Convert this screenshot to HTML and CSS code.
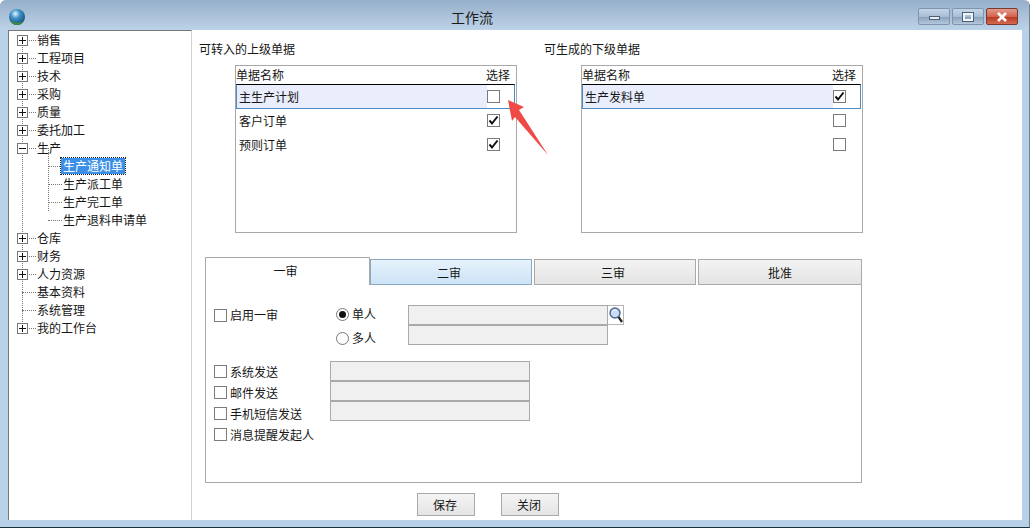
FILE: index.html
```html
<!DOCTYPE html>
<html lang="zh-CN">
<head>
<meta charset="utf-8">
<title>工作流</title>
<link rel="stylesheet" href="styles.css">
</head>
<body>
<div class="window">
  <header class="titlebar">
    <svg class="globe" width="16" height="16" viewBox="0 0 16 16">
      <defs>
        <radialGradient id="g" cx="0.4" cy="0.3" r="0.8">
          <stop offset="0" stop-color="#e8f6ff"/>
          <stop offset="0.35" stop-color="#3f94c8"/>
          <stop offset="1" stop-color="#0c3d6e"/>
        </radialGradient>
      </defs>
      <circle cx="8" cy="8" r="8" fill="url(#g)"/>
      <path d="M1 11c3 3 9 4 13 1-2 4-4 4-6 4-3 0-6-2-7-5z" fill="#3f8a3a"/>
    </svg>
    <div class="title">工作流</div>
    <div class="controls">
      <div class="ctl"><span class="min"></span></div>
      <div class="ctl"><span class="max"></span></div>
      <div class="ctl close">
        <svg width="14" height="10" viewBox="0 0 14 10"><path d="M3 1l8 8M11 1l-8 8" stroke="#fff" stroke-width="2.6" fill="none"/></svg>
      </div>
    </div>
  </header>
  <div class="client">
    <nav class="tree">
      <div class="node"><i class="box plus"></i><span>销售</span></div>
      <div class="node"><i class="box plus"></i><span>工程项目</span></div>
      <div class="node"><i class="box plus"></i><span>技术</span></div>
      <div class="node"><i class="box plus"></i><span>采购</span></div>
      <div class="node"><i class="box plus"></i><span>质量</span></div>
      <div class="node"><i class="box plus"></i><span>委托加工</span></div>
      <div class="node"><i class="box"></i><span>生产</span></div>
      <div class="kids">
        <div class="kid"><span class="sel">生产通知单</span></div>
        <div class="kid"><span>生产派工单</span></div>
        <div class="kid"><span>生产完工单</span></div>
        <div class="kid"><span>生产退料申请单</span></div>
      </div>
      <div class="node"><i class="box plus"></i><span>仓库</span></div>
      <div class="node"><i class="box plus"></i><span>财务</span></div>
      <div class="node"><i class="box plus"></i><span>人力资源</span></div>
      <div class="node leaf"><span>基本资料</span></div>
      <div class="node leaf"><span>系统管理</span></div>
      <div class="node"><i class="box plus"></i><span>我的工作台</span></div>
    </nav>
    <main class="main">
      <div class="lists">
        <section class="col col-left">
          <h2 class="heading">可转入的上级单据</h2>
          <div class="table">
            <div class="thead"><span>单据名称</span><span>选择</span></div>
            <div class="row active"><span class="name">主生产计划</span><span class="pick"><i class="cb"></i></span></div>
            <div class="row"><span class="name">客户订单</span><span class="pick"><i class="cb on"><svg width="11" height="11" viewBox="0 0 11 11"><path d="M1.5 5.5l2.5 3 5.500-7" stroke="#111" stroke-width="2" fill="none"/></svg></i></span></div>
            <div class="row"><span class="name">预则订单</span><span class="pick"><i class="cb on"><svg width="11" height="11" viewBox="0 0 11 11"><path d="M1.5 5.5l2.5 3 5.500-7" stroke="#111" stroke-width="2" fill="none"/></svg></i></span></div>
          </div>
        </section>
        <section class="col col-right">
          <h2 class="heading">可生成的下级单据</h2>
          <div class="table">
            <div class="thead"><span>单据名称</span><span>选择</span></div>
            <div class="row active"><span class="name">生产发料单</span><span class="pick"><i class="cb on"><svg width="11" height="11" viewBox="0 0 11 11"><path d="M1.5 5.5l2.5 3 5.500-7" stroke="#111" stroke-width="2" fill="none"/></svg></i></span></div>
            <div class="row"><span class="name"></span><span class="pick"><i class="cb"></i></span></div>
            <div class="row"><span class="name"></span><span class="pick"><i class="cb"></i></span></div>
          </div>
        </section>
      </div>

      <div class="tabs">
        <div class="tab t1 current">一审</div>
        <div class="tab t2 hover">二审</div>
        <div class="tab t3">三审</div>
        <div class="tab t4">批准</div>
      </div>
      <div class="panel">
        <div class="approver">
          <label class="check enable"><i class="cb"></i>启用一审</label>
          <div class="radios">
            <label class="radio"><i class="rd on"></i>单人</label>
            <label class="radio"><i class="rd"></i>多人</label>
          </div>
          <div class="fields">
            <div class="field-line">
              <div class="input"></div>
              <div class="lookup">
                <svg width="16" height="18" viewBox="0 0 16 18">
                  <circle cx="7" cy="7" r="5" fill="#c9daf4" stroke="#47698f" stroke-width="1.4"/>
                  <path d="M4.5 5.5c1-1.500 3-1.500 4-.8" stroke="#fff" fill="none"/>
                  <path d="M10.500 11l3.500 5" stroke="#222" stroke-width="2.200"/>
                </svg>
              </div>
            </div>
            <div class="input"></div>
          </div>
        </div>
        <div class="notify">
          <div class="checks">
            <label class="check"><i class="cb"></i>系统发送</label>
            <label class="check"><i class="cb"></i>邮件发送</label>
            <label class="check"><i class="cb"></i>手机短信发送</label>
            <label class="check"><i class="cb"></i>消息提醒发起人</label>
          </div>
          <div class="inputs">
            <div class="input"></div>
            <div class="input"></div>
            <div class="input"></div>
          </div>
        </div>
      </div>
      <div class="actions">
        <button class="btn" type="button">保存</button>
        <button class="btn" type="button">关闭</button>
      </div>
    </main>
  </div>
  <svg class="arrow" width="44" height="60" viewBox="0 0 44 60">
    <polygon points="1,1 17,8 12,11 41,56 8,18 5,22" fill="#ef4a45"/>
  </svg>
</div>
</body>
</html>
```
FILE: styles.css
```css
* { box-sizing: border-box; }
html, body {
  margin: 0;
  height: 100%;
  background: #fff;
  overflow: hidden;
}
body {
  font: 12px/16px "Noto Sans CJK SC", "Liberation Sans", sans-serif;
  color: #161616;
}
.window {
  position: relative;
  width: 1030px;
  height: 528px;
  display: flex;
  flex-direction: column;
  background: #b8d0e8;
  border-right: 1px solid #6f8296;
  border-bottom: 1px solid #14323c;
  border-radius: 6px 6px 0 0;
  padding: 0 7px 7px 8px;
}
.titlebar {
  flex: none;
  height: 30px;
  margin: 0 -7px 0 -8px;
  padding: 9px 11px 0 9px;
  display: flex;
  align-items: flex-start;
  border-radius: 6px 6px 0 0;
  background: linear-gradient(#95aec9, #a6bdd5 40%, #bcd2e8);
}
.globe { flex: none; }
.title {
  margin: -1px 0 0 426px;
  font-size: 14px;
  line-height: 18px;
  color: #1a1a1a;
}
.controls {
  margin-left: auto;
  display: flex;
  gap: 2px;
  margin-top: -1px;
}
.ctl {
  width: 32px;
  height: 17px;
  border: 1px solid #7f95ad;
  border-radius: 2px;
  background: linear-gradient(#c6d6e8, #a8bed6 50%, #8aa3bd 55%, #b4c8dc);
  display: flex;
  align-items: center;
  justify-content: center;
}
.ctl .min {
  width: 11px;
  height: 4px;
  margin-top: 3px;
  background: #e8eef5;
  border: 1px solid #4c5f74;
}
.ctl .max {
  width: 10px;
  height: 8px;
  background: transparent;
  border: 2px solid #f0f4f8;
  outline: 1px solid #4c5f74;
}
.ctl.close {
  background: linear-gradient(#e29b8a, #d2644f 50%, #b93a24 55%, #d56a50);
  border-color: #7a3a30;
}
.client {
  flex: 1;
  min-height: 0;
  display: flex;
  background: #fff;
}

/* tree */
.tree {
  position: relative;
  flex: none;
  width: 184px;
  border-right: 1px solid #cfcfcf;
  border-left: 1px solid #777;
  border-top: 1px solid #777;
}
.tree::before {
  content: "";
  position: absolute;
  left: 13px;
  top: 9px;
  height: 288px;
  border-left: 1px dotted #777;
}
.node {
  position: relative;
  height: 18px;
  display: flex;
  align-items: center;
  padding-left: 28px;
}
.node::before {
  content: "";
  position: absolute;
  left: 13px;
  width: 14px;
  top: 9px;
  border-top: 1px dotted #777;
}
.box {
  position: absolute;
  z-index: 1;
  left: 8px;
  top: 4px;
  width: 11px;
  height: 11px;
  border: 1px solid #777;
  background: #fff;
}
.box::before {
  content: "";
  position: absolute;
  left: 1px;
  right: 1px;
  top: 4px;
  height: 1px;
  background: #111;
}
.box.plus::after {
  content: "";
  position: absolute;
  top: 1px;
  bottom: 1px;
  left: 4px;
  width: 1px;
  background: #111;
}
.kids { position: relative; }
.kids::before {
  content: "";
  position: absolute;
  left: 39px;
  top: -9px;
  height: 63px;
  border-left: 1px dotted #777;
}
.kid {
  position: relative;
  height: 18px;
  padding-left: 54px;
  display: flex;
  align-items: center;
}
.kid::before {
  content: "";
  position: absolute;
  left: 39px;
  width: 14px;
  top: 9px;
  border-top: 1px dotted #777;
}
.sel {
  margin-left: -2px;
  padding: 0 2px;
  height: 16px;
  background: #3b8fe8;
  color: #fff;
  outline: 1px dotted #222;
}

/* main */
.main {
  flex: 1;
  min-width: 0;
  padding: 11px 0 0 7px;
}
.lists { display: flex; }
.col-left { width: 345px; }
.heading {
  margin: 0 0 8px;
  font-size: 12px;
  line-height: 16px;
  font-weight: normal;
}
.table {
  width: 282px;
  height: 168px;
  border: 1px solid #a8a8a8;
}
.col-left .table { margin-left: 36px; }
.col-right .table { margin-left: 37px; }
.thead {
  height: 18px;
  display: flex;
  justify-content: space-between;
  padding-right: 6px;
  line-height: 18px;
}
.row {
  height: 24px;
  width: 279px;
  display: flex;
  align-items: center;
  border: 1px solid transparent;
}
.row.active {
  height: 25px;
  border-color: #000 #4a8bc4 #4a8bc4 #4a8bc4;
}
.name {
  flex: 1;
  align-self: stretch;
  display: flex;
  align-items: center;
  padding-left: 2px;
}
.row.active .name { background: #e9edfc; }
.pick {
  flex: none;
  width: 27px;
  display: flex;
}
.row:not(.active) .pick { margin-top: -2px; }
.cb {
  flex: none;
  display: flex;
  align-items: center;
  justify-content: center;
  width: 13px;
  height: 13px;
  border: 1px solid #7b7b7b;
  background: #fff;
}

/* tabs */
.tabs {
  display: flex;
  margin: 24px 0 0 6px;
  width: 657px;
  height: 28px;
  align-items: flex-end;
}
.tab {
  height: 26px;
  text-align: center;
  line-height: 26px;
  border: 1px solid #a9a9a9;
  background: linear-gradient(#f3f3f3, #e3e3e3);
}
.t1 { width: 165px; padding-right: 4px; }
.t2 { width: 162px; margin-right: 2px; padding-right: 4px; }
.t3 { width: 162px; margin-right: 2px; padding-right: 4px; }
.t4 { width: 164px; }
.tab.current {
  height: 28px;
  line-height: 26px;
  border-bottom: 0;
  background: #fff;
}
.tab.hover {
  border-color: #8aa9c0;
  background: linear-gradient(#e6f2fc, #cde3f6);
}
.panel {
  width: 657px;
  height: 198px;
  margin-left: 6px;
  padding: 20px 0 0 8px;
  border: 1px solid #a9a9a9;
  border-top: 0;
}
.approver { display: flex; }
.check {
  display: flex;
  align-items: center;
  gap: 3px;
  height: 21px;
}
.enable {
  width: 122px;
  height: 20px;
}
.radios {
  width: 72px;
  display: flex;
  flex-direction: column;
  gap: 8px;
  padding-top: 1px;
}
.radio {
  display: flex;
  align-items: center;
  gap: 3px;
  height: 16px;
}
.rd {
  position: relative;
  flex: none;
  width: 13px;
  height: 13px;
  border: 1px solid #777;
  border-radius: 50%;
  background: #fff;
}
.rd.on::after {
  content: "";
  position: absolute;
  inset: 2px;
  border-radius: 50%;
  background: #111;
}
.field-line { display: flex; }
.input {
  width: 200px;
  height: 20px;
  border: 1px solid #a9a9a9;
  background: #f0f0f0;
}
.lookup {
  width: 16px;
  height: 20px;
  border: 1px solid #b5b5b5;
  border-left: 0;
  background: #fff;
}
.lookup svg { display: block; }
.notify {
  display: flex;
  margin-top: 15px;
}
.checks { width: 116px; }
.inputs { display: flex; flex-direction: column; }
.actions {
  display: flex;
  gap: 26px;
  margin: 10px 0 0 218px;
}
.btn {
  width: 58px;
  height: 23px;
  padding: 0 2px 0 0;
  font: inherit;
  color: inherit;
  border: 1px solid #a9a9a9;
  background: linear-gradient(#f4f4f4, #e4e4e4);
}

/* annotation over the list */
.arrow {
  position: absolute;
  left: 507px;
  top: 99px;
}
```
